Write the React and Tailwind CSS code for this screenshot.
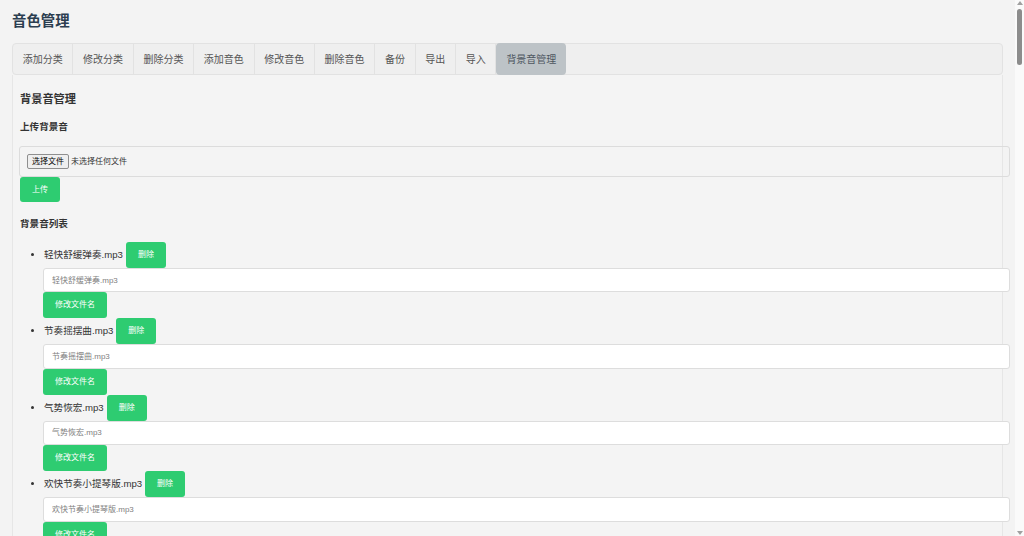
import React from "react";
import clsx from "clsx";

const tabs = [
  "添加分类",
  "修改分类",
  "删除分类",
  "添加音色",
  "修改音色",
  "删除音色",
  "备份",
  "导出",
  "导入",
  "背景音管理",
];

const tracks = [
  "轻快舒缓弹奏.mp3",
  "节奏摇摆曲.mp3",
  "气势恢宏.mp3",
  "欢快节奏小提琴版.mp3",
  "温柔钢琴曲.mp3",
  "悠扬古筝.mp3",
];

const GreenButton = ({ children, className }) => (
  <button
    className={clsx(
      "flex items-center justify-center bg-[#2ecc71] text-white text-[8px] leading-none px-[12px] rounded-[3px] shrink-0",
      className
    )}
  >
    {children}
  </button>
);

// thin page scrollbar on the right edge
const ScrollTrack = () => (
  <div className="fixed top-0 right-0 h-screen w-[9px] bg-[#fafafa]">
    <div className="absolute top-[1px] left-[2px] h-0 w-0 border-x-[3px] border-b-[4px] border-x-transparent border-b-[#a0a0a0]" />
    <div className="absolute top-[9px] left-[2px] h-[56px] w-[5px] rounded-[3px] bg-[#8c8c8c]" />
    <div className="absolute bottom-[1px] left-[2px] h-0 w-0 border-x-[3px] border-t-[4px] border-x-transparent border-t-[#a0a0a0]" />
  </div>
);

const App = () => {
  const active = "背景音管理";

  return (
    <div className="min-h-screen overflow-x-hidden bg-[#f3f3f3] px-3 pb-6 font-['Liberation_Sans','Noto_Sans_CJK_SC',sans-serif] text-[#333]">
      <h1 className="pt-[12px] text-[14.4px] leading-[18px] font-bold text-[#2c3e50]">音色管理</h1>

      {/* tab strip */}
      <div className="mt-[13px] flex h-[32px] w-[991px] rounded-[4px] border border-[#e2e2e2] bg-[#efefef]">
        {tabs.map((t) =>
          t === active ? (
            <div
              key={t}
              className="-my-px flex items-center rounded-[4px] bg-[#bdc3c7] px-[10px] text-[10px] text-[#4d5660]"
            >
              {t}
            </div>
          ) : (
            <div
              key={t}
              className="flex items-center border-r border-[#e2e2e2] px-[9.7px] text-[10px] text-[#555]"
            >
              {t}
            </div>
          )
        )}
      </div>

      {/* background sound panel */}
      <div className="w-[991px] border-x border-[#e6e6e6] bg-[#f4f4f4] px-[7px] pt-[16px] pb-6">
        <h3 className="text-[11.2px] leading-[16px] font-bold">背景音管理</h3>

        <h4 className="mt-[13px] text-[9.6px] leading-[14px] font-bold">上传背景音</h4>
        <div className="mt-[12px] -ml-px flex h-[31px] w-[991px] items-center rounded-[3px] border border-[#dcdcdc] px-[7px]">
          <span className="flex h-[15px] items-center rounded-[2px] border border-[#8f8f8f] bg-[#efefef] px-[4px] text-[8px] text-black">
            选择文件
          </span>
          <span className="ml-[2px] text-[8px] text-[#333]">未选择任何文件</span>
        </div>
        <GreenButton className="h-[25px]">上传</GreenButton>

        <h4 className="mt-[15px] text-[9.6px] leading-[14px] font-bold">背景音列表</h4>
        <ul className="mt-[11px] list-disc pl-[24px]">
          {tracks.map((name) => (
            <li key={name} className="text-[9.6px]">
              <div className="flex h-[26px] items-center">
                <span>{name}</span>
                <GreenButton className="ml-[3px] h-[26px]">删除</GreenButton>
              </div>
              <input
                readOnly
                placeholder={name}
                className="-ml-px block h-[24.4px] w-[967px] rounded-[3px] border border-[#dddddd] bg-white px-[8px] text-[8px] placeholder:text-[#808080] outline-none"
              />
              <GreenButton className="-ml-px h-[26px]">修改文件名</GreenButton>
            </li>
          ))}
        </ul>
      </div>

      <ScrollTrack />
    </div>
  );
};

export default App;
